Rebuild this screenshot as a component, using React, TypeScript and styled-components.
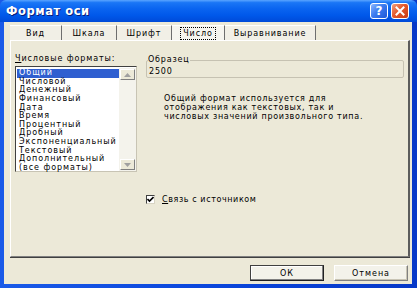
import React from 'react';
import styled, { createGlobalStyle } from 'styled-components';

const Global = createGlobalStyle`
  html, body { margin: 0; padding: 0; background: #ffffff; }
  body { font-family: "DejaVu Sans", "Liberation Sans", sans-serif; }
  * { box-sizing: border-box; }
`;

const Window = styled.div`
  width: 417px;
  height: 288px;
  display: flex;
  flex-direction: column;
  background: linear-gradient(to right, #1a5ae8 0%, #0a46dc 50%, #0638c8 100%);
`;

const TitleBar = styled.div`
  height: 22px;
  flex: none;
  display: flex;
  align-items: center;
  padding: 0 8px 0 6px;
  background: linear-gradient(to bottom, #5aa4ff 0%, #1a76f6 12%, #0a64f0 40%, #0058ea 70%, #004ad8 100%);
  border-radius: 6px 6px 0 0;
`;

const Title = styled.div`
  flex: 1;
  color: #ffffff;
  font-weight: bold;
  font-size: 11.5px;
  letter-spacing: 0.55px;
  text-shadow: 1px 1px 0 #0a1e7a;
`;

const CaptionButton = styled.div<{ $kind: 'help' | 'close' }>`
  width: 18px;
  height: 16px;
  margin-left: 3px;
  border: 1px solid #ffffff;
  border-radius: 3px;
  display: flex;
  align-items: center;
  justify-content: center;
  color: #ffffff;
  font-weight: bold;
  font-size: 12px;
  background: ${p => p.$kind === 'close'
    ? 'linear-gradient(135deg, #f0a080 0%, #e4582c 45%, #c83c14 100%)'
    : 'linear-gradient(135deg, #8cb8ff 0%, #3c7cf0 45%, #1e58d8 100%)'};
`;

const Body = styled.div`
  flex: 1;
  display: flex;
  flex-direction: column;
  background: #ece9d8;
  margin: 0 5px 4px 4px;
  padding: 3px 2px 0 6px;
`;

const TabRow = styled.div`
  height: 15px;
  display: flex;
  flex: none;
`;

const Tab = styled.div<{ $w: number; $active?: boolean }>`
  width: ${p => p.$w}px;
  height: 100%;
  display: flex;
  align-items: center;
  justify-content: center;
  font-size: 8px;
  letter-spacing: 0.9px;
  color: #000;
  background: ${p => (p.$active ? '#f6f5ef' : '#f1efe6')};
  border-top: 1px solid #ffffff;
  border-right: 1px solid #6e6e6e;
  padding-top: 1px;
`;

const FocusBox = styled.span`
  padding: 1px 2px;
  outline: 1px dotted #000;
`;

const Panel = styled.div`
  height: 217px;
  flex: none;
  display: grid;
  grid-template-columns: 122px 1fr;
  column-gap: 9px;
  padding: 13px 4px 0 4px;
  border-top: 1px solid #ffffff;
  border-left: 1px solid #ffffff;
  border-right: 2px solid #5c5c5c;
  border-bottom: 1px solid #808080;
  box-shadow: 0 1px 0 #404040;
`;

const LeftCol = styled.div`
  display: flex;
  flex-direction: column;
`;

const Label = styled.div`
  font-size: 8px;
  letter-spacing: 0.9px;
  height: 12px;
  line-height: 10px;
  color: #000;
`;

const Under = styled.span`
  text-decoration: underline;
`;

const ListBox = styled.div`
  height: 106px;
  display: flex;
  background: #ffffff;
  border-top: 1px solid #404040;
  border-left: 1px solid #404040;
  border-right: 1px solid #c8c4b4;
  border-bottom: 1px solid #c8c4b4;
  padding: 1px 0 0 1px;
`;

const Items = styled.div`
  flex: 1;
  display: flex;
  flex-direction: column;
  padding-top: 1px;
`;

const Item = styled.div<{ $sel?: boolean }>`
  height: 8.65px;
  line-height: 8.65px;
  font-size: 8px;
  letter-spacing: 0.95px;
  padding-left: 2px;
  white-space: nowrap;
  color: ${p => (p.$sel ? '#ffffff' : '#000000')};
  background: ${p => (p.$sel ? '#2f5fd0' : 'transparent')};
`;

const ScrollBar = styled.div`
  width: 17px;
  display: flex;
  flex-direction: column;
  justify-content: space-between;
  background: #f4f3ec;
  padding: 1px;
`;

const ArrowBtn = styled.div`
  height: 11px;
  display: flex;
  align-items: center;
  justify-content: center;
  background: #ece9d8;
  border-top: 1px solid #ffffff;
  border-left: 1px solid #ffffff;
  border-right: 1px solid #808080;
  border-bottom: 1px solid #808080;
`;

const RightCol = styled.div`
  display: flex;
  flex-direction: column;
  margin-top: 2px;
`;

const SampleBox = styled.fieldset`
  margin: 0;
  height: 22px;
  padding: 3px 0 0 2px;
  border: 1px solid #c6c2b2;
  border-radius: 2px;
  font-size: 8px;
  letter-spacing: 0.8px;
  color: #000;
  line-height: 10px;
`;

const Legend = styled.legend`
  padding: 0 1px 0 0;
  margin-left: -1px;
  font-size: 8px;
  line-height: 8px;
  letter-spacing: 0.8px;
`;

const Description = styled.div`
  margin: 16px 0 0 18px;
  font-size: 8px;
  line-height: 9px;
  letter-spacing: 0.7px;
  color: #000;
`;

const CheckRow = styled.div`
  margin-top: 74px;
  display: flex;
  align-items: center;
  gap: 7px;
  font-size: 8px;
  letter-spacing: 0.6px;
  color: #000;
`;

const CheckBox = styled.div`
  width: 9px;
  height: 9px;
  background: #ffffff;
  border-top: 1px solid #404040;
  border-left: 1px solid #404040;
  border-right: 1px solid #d8d4c4;
  border-bottom: 1px solid #d8d4c4;
  display: flex;
  align-items: center;
  justify-content: center;
`;

const ButtonRow = styled.div`
  display: flex;
  justify-content: flex-end;
  gap: 10px;
  margin-top: 8px;
  padding-right: 2px;
`;

const Button = styled.div<{ $default?: boolean }>`
  width: 74px;
  height: 16px;
  display: flex;
  align-items: center;
  justify-content: center;
  font-size: 8px;
  letter-spacing: 1px;
  color: #000;
  background: #f3f2ea;
  border-top: 1px solid ${p => (p.$default ? '#404040' : '#ffffff')};
  border-left: 1px solid ${p => (p.$default ? '#404040' : '#ffffff')};
  border-right: 1px solid ${p => (p.$default ? '#202020' : '#808080')};
  border-bottom: 1px solid ${p => (p.$default ? '#202020' : '#808080')};
  box-shadow: ${p => (p.$default ? 'inset -1px -1px 0 #808080, inset 1px 1px 0 #ffffff' : 'inset -1px -1px 0 #c8c4b4')};
`;

const formats = [
  'Общий', 'Числовой', 'Денежный', 'Финансовый', 'Дата', 'Время', 'Процентный',
  'Дробный', 'Экспоненциальный', 'Текстовый', 'Дополнительный', '(все форматы)',
];

const tabs: { label: string; w: number }[] = [
  { label: 'Вид', w: 52 },
  { label: 'Шкала', w: 55 },
  { label: 'Шрифт', w: 55 },
  { label: 'Число', w: 53 },
  { label: 'Выравнивание', w: 91 },
];

export default function App() {
  return (
    <>
      <Global />
      <Window>
        <TitleBar>
          <Title>Формат оси</Title>
          <CaptionButton $kind="help">?</CaptionButton>
          <CaptionButton $kind="close">
            <svg width="10" height="10" viewBox="0 0 10 10">
              <path d="M1.5 1.5 L8.5 8.5 M8.5 1.5 L1.5 8.5" stroke="#fff" strokeWidth="2" strokeLinecap="square" />
            </svg>
          </CaptionButton>
        </TitleBar>
        <Body>
          <TabRow>
            {tabs.map(t => (
              <Tab key={t.label} $w={t.w} $active={t.label === 'Число'}>
                {t.label === 'Число' ? <FocusBox>{t.label}</FocusBox> : t.label}
              </Tab>
            ))}
          </TabRow>
          <Panel>
            <LeftCol>
              <Label><Under>Ч</Under>исловые форматы:</Label>
              <ListBox>
                <Items>
                  {formats.map((f, i) => (
                    <Item key={f} $sel={i === 0}>{f}</Item>
                  ))}
                </Items>
                <ScrollBar>
                  <ArrowBtn>
                    <svg width="7" height="4" viewBox="0 0 7 4"><path d="M0 4 L3.5 0 L7 4 Z" fill="#a0a0a0" /></svg>
                  </ArrowBtn>
                  <ArrowBtn>
                    <svg width="7" height="4" viewBox="0 0 7 4"><path d="M0 0 L3.5 4 L7 0 Z" fill="#a0a0a0" /></svg>
                  </ArrowBtn>
                </ScrollBar>
              </ListBox>
            </LeftCol>
            <RightCol>
              <SampleBox>
                <Legend>Образец</Legend>
                2500
              </SampleBox>
              <Description>
                Общий формат используется для<br />
                отображения как текстовых, так и<br />
                числовых значений произвольного типа.
              </Description>
              <CheckRow>
                <CheckBox>
                  <svg width="7" height="7" viewBox="0 0 7 7">
                    <path d="M0.5 3 L2.5 5 L6.5 1" stroke="#000" strokeWidth="1.6" fill="none" />
                  </svg>
                </CheckBox>
                <span><Under>С</Under>вязь с источником</span>
              </CheckRow>
            </RightCol>
          </Panel>
          <ButtonRow>
            <Button $default>ОК</Button>
            <Button>Отмена</Button>
          </ButtonRow>
        </Body>
      </Window>
    </>
  );
}
